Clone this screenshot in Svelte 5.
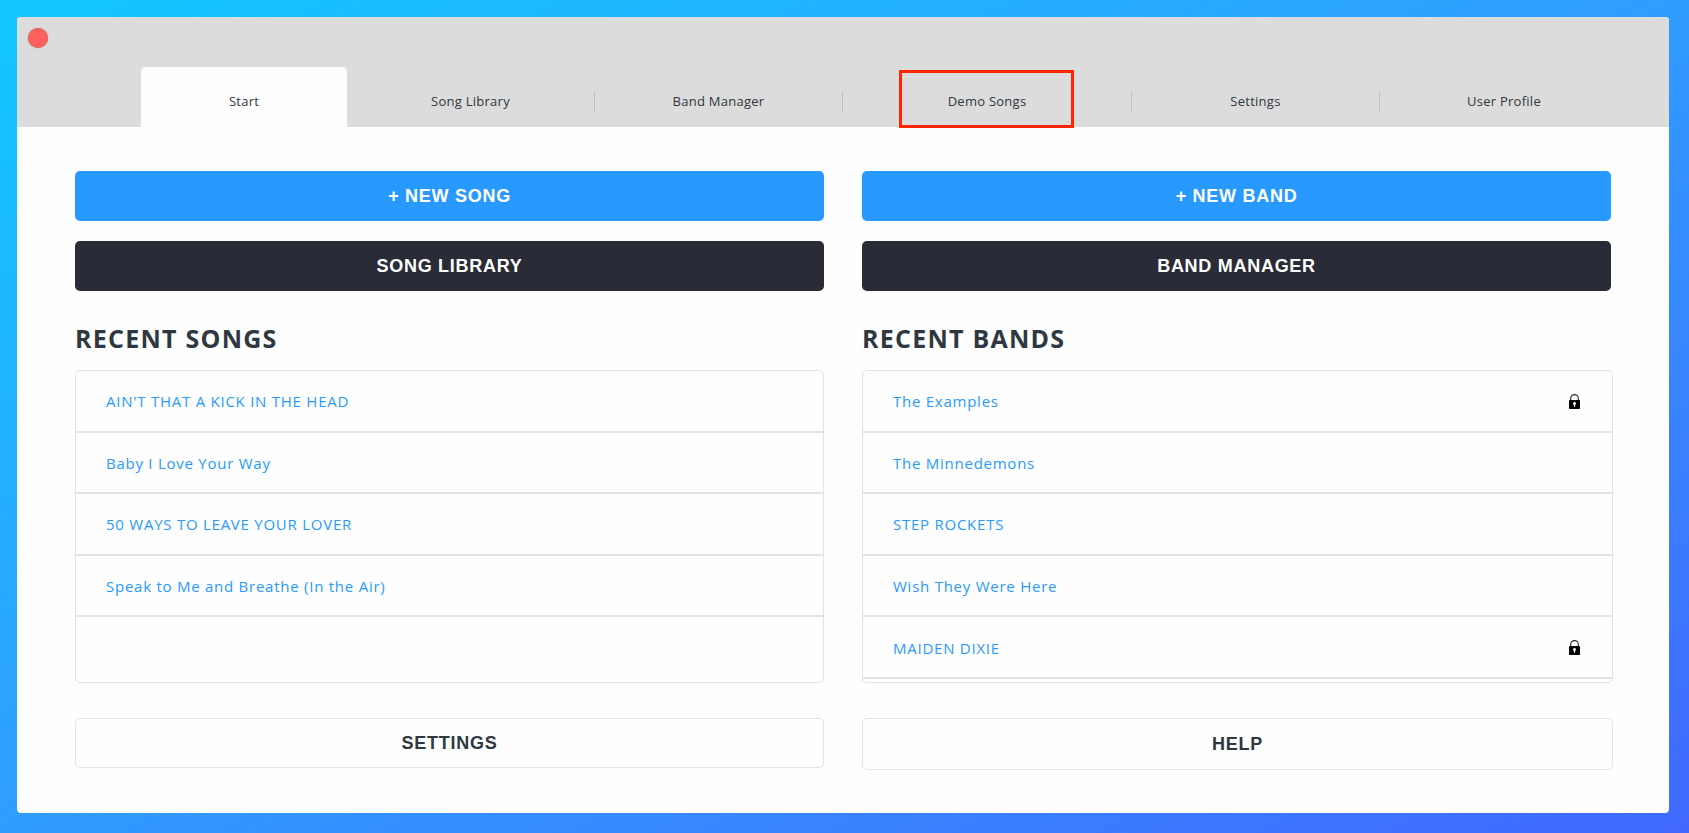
<script>
	const tabs = ['Start', 'Song Library', 'Band Manager', 'Demo Songs', 'Settings', 'User Profile'];
	const highlightedTab = 'Demo Songs';

	const songs = [
		'AIN\'T THAT A KICK IN THE HEAD',
		'Baby I Love Your Way',
		'50 WAYS TO LEAVE YOUR LOVER',
		'Speak to Me and Breathe (In the Air)'
	];

	const bands = [
		{ name: 'The Examples', locked: true },
		{ name: 'The Minnedemons', locked: false },
		{ name: 'STEP ROCKETS', locked: false },
		{ name: 'Wish They Were Here', locked: false },
		{ name: 'MAIDEN DIXIE', locked: true }
	];

	let activeTab = $state('Start');
</script>

<svelte:head>
	<title>Start</title>
</svelte:head>

<div class="window">
	<header>
		<button class="close" aria-label="Close"></button>
		<nav>
			{#each tabs as tab}
				<button
					class="tab"
					class:active={tab === activeTab}
					class:highlighted={tab === highlightedTab}
					onclick={() => (activeTab = tab)}
				>
					<span>{tab}</span>
				</button>
			{/each}
		</nav>
	</header>

	<main>
		<section>
			<button class="btn primary">+ NEW SONG</button>
			<button class="btn dark">SONG LIBRARY</button>
			<h2>RECENT SONGS</h2>
			<ul>
				{#each songs as song}
					<li><a href="#song">{song}</a></li>
				{/each}
			</ul>
			<button class="btn outline">SETTINGS</button>
		</section>

		<section class="bands">
			<button class="btn primary">+ NEW BAND</button>
			<button class="btn dark">BAND MANAGER</button>
			<h2>RECENT BANDS</h2>
			<ul>
				{#each bands as band}
					<li>
						<a href="#band">{band.name}</a>
						{#if band.locked}
							<svg class="lock" viewBox="0 0 11 15" role="img" aria-label="Locked">
								<path d="M1.7 7V4.4a3.8 3.8 0 0 1 7.6 0V7" fill="none" stroke="#222" stroke-width="1.1" />
								<rect x="0" y="6" width="11" height="9" rx="0.8" />
								<path d="M5.5 8a1.5 1.5 0 0 1 .8 2.7l-.3 2h-1l-.3-2A1.5 1.5 0 0 1 5.5 8z" fill="#fff" />
							</svg>
						{/if}
					</li>
				{/each}
			</ul>
			<button class="btn outline help">HELP</button>
		</section>
	</main>
</div>

<style>
	:global(body) {
		background: linear-gradient(to bottom right, #12c8ff, #309cff 50%, #4168ff);
	}

	:global(#app) {
		display: flex;
		min-height: 100vh;
	}

	.window {
		flex: 1;
		margin: 17px 20px 20px 17px;
		background-color: #fefefe;
		border-radius: 4px;
		overflow: hidden;
		font-family: 'Open Sans', sans-serif;
		color: #2f3840;
	}

	button {
		border: none;
		padding: 0;
		color: inherit;
		cursor: pointer;
	}

	header {
		display: flex;
		flex-direction: column;
		justify-content: space-between;
		height: 110px;
		background-color: #dcdcdc;
	}

	.close {
		width: 20px;
		height: 20px;
		margin: 11px 0 0 11px;
		border-radius: 50%;
		background-color: #ff605c;
		box-shadow: 0 0 1px rgba(0, 0, 0, 0.5);
	}

	nav {
		display: grid;
		grid-template-columns: 206fr 248fr 248fr 289fr 248fr 248fr;
		margin: 0 41px 0 124px;
	}

	.tab {
		position: relative;
		display: flex;
		align-items: center;
		height: 60px;
		padding-top: 10px;
		background: none;
		font-family: inherit;
		font-size: 13px;
		letter-spacing: 0.02em;
	}

	.tab span {
		flex: 1;
		height: 20px;
		line-height: 18px;
		border-right: 1px solid #c0c0c0;
	}

	.tab.active span,
	.tab:last-child span {
		border-right: none;
	}

	.tab.active {
		background-color: #fefefe;
		border-radius: 5px 5px 0 0;
	}

	/* frame drawn over the tab, one pixel into the page below */
	.tab.highlighted::after {
		content: '';
		position: absolute;
		left: 56px;
		right: 58px;
		top: 3px;
		bottom: -1px;
		border: 3px solid #ff2600;
	}

	main {
		display: grid;
		grid-template-columns: 1fr 1fr;
		gap: 38px;
		padding: 44px 58px 43px;
	}

	section {
		display: flex;
		flex-direction: column;
	}

	.btn {
		height: 50px;
		margin-bottom: 20px;
		border-radius: 5px;
		font-family: 'Liberation Sans', Helvetica, sans-serif;
		font-size: 18px;
		font-weight: bold;
		letter-spacing: 0.04em;
	}

	.primary {
		background-color: #289aff;
		color: #fff;
	}

	.dark {
		background-color: #292b36;
		color: #fff;
	}

	.outline {
		margin: 35px 0 0;
		background: none;
		border: 1px solid #e3e3e3;
	}

	h2 {
		margin: 10px 0 15px;
		font-size: 25px;
		line-height: 34px;
		letter-spacing: 0.05em;
	}

	ul {
		display: grid;
		grid-template-rows: repeat(5, 1fr);
		height: 308px;
		margin: 0;
		padding: 0 0 3px;
		border: 1px solid #e3e3e3;
		border-radius: 5px;
		list-style: none;
	}

	li {
		display: flex;
		align-items: center;
		justify-content: space-between;
		padding: 1px 32px 0 30px;
		border-bottom: 2px solid #e3e3e3;
	}

	a {
		color: #289aff;
		font-size: 15px;
		letter-spacing: 0.05em;
		text-decoration: none;
	}

	.lock {
		width: 11px;
		height: 15px;
	}

	.bands ul,
	.help {
		margin-right: -2px;
	}

	.help {
		height: 52px;
	}
</style>
